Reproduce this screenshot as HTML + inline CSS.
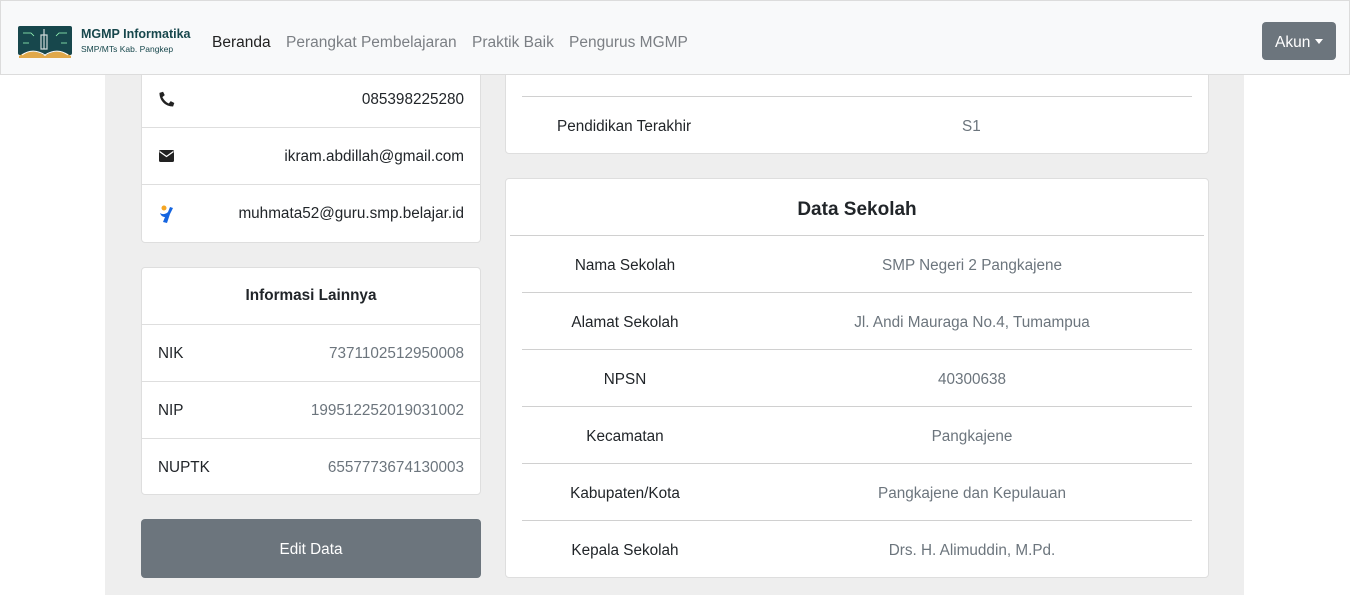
<!DOCTYPE html>
<html><head><meta charset="utf-8"><style>
*{box-sizing:border-box;margin:0;padding:0}
body{width:1350px;height:595px;overflow:hidden;background:#fff;font-family:"Liberation Sans",sans-serif;font-size:15.3px;color:#212529;position:relative}
.wrap{position:absolute;left:105px;top:0;width:1139px;height:595px;background:#eeeeee}
.card{position:absolute;background:#fff;border:1px solid #dedede;border-radius:4px}
.row{position:absolute;left:0;right:0;border-top:1px solid #dedede}
.t{position:absolute;white-space:nowrap}
.gray{color:#6c757d}
nav{position:absolute;left:0;top:0;width:1350px;height:75px;background:#f8f9fa;border:1px solid #dcdcdc}
nav a{position:absolute;top:33px;color:#7b7f84;font-size:15.5px}
.hl{position:absolute;left:16px;right:16px;height:1px;background:#d0d0d0}
</style></head><body>
<div class="wrap"></div>

<div class="card" style="left:141px;top:40px;width:340px;height:203px">
  <div class="row" style="top:86px"></div>
  <div class="row" style="top:143px"></div>
  <svg class="t" style="left:16px;top:49px" width="18" height="18" viewBox="0 0 16 16"><path d="M14.5 11.5l-3.2-1.6-1.7 2.1c-2.6-1.3-4.4-3.1-5.7-5.7l2.1-1.7L4.5 1.5 1.3 2.6C1.3 9.5 6.5 14.7 13.4 14.7z" fill="#222"/></svg>
  <div class="t" style="right:16px;top:50px">085398225280</div>
  <svg class="t" style="left:17px;top:109px" width="15" height="12" viewBox="0 0 15 12"><rect x="0" y="0" width="15" height="12" rx="1.5" fill="#222"/><path d="M0.5 1.5L7.5 6.5 14.5 1.5" stroke="#fff" stroke-width="1.3" fill="none"/></svg>
  <div class="t" style="right:16px;top:107px">ikram.abdillah@gmail.com</div>
  <svg class="t" style="left:17px;top:163px" width="16" height="20" viewBox="0 0 16 20"><circle cx="5" cy="4" r="2.5" fill="#f5a623"/><path d="M1 9c3 2 6 1 8-1l2-5 3 1-3 6-3 9-4-1 2-5C4 13 2 12 1 9z" fill="#1565e0"/></svg>
  <div class="t" style="right:16px;top:164px">muhmata52@guru.smp.belajar.id</div>
</div>

<div class="card" style="left:141px;top:267px;width:340px;height:228px">
  <div class="t" style="left:0;right:0;text-align:center;top:19px;font-weight:bold">Informasi Lainnya</div>
  <div class="row" style="top:56px"></div>
  <div class="row" style="top:113px"></div>
  <div class="row" style="top:170px"></div>
  <div class="t" style="left:16px;top:77px">NIK</div><div class="t gray" style="right:16px;top:77px">7371102512950008</div>
  <div class="t" style="left:16px;top:134px">NIP</div><div class="t gray" style="right:16px;top:134px">199512252019031002</div>
  <div class="t" style="left:16px;top:191px">NUPTK</div><div class="t gray" style="right:16px;top:191px">6557773674130003</div>
</div>

<div style="position:absolute;left:141px;top:519px;width:340px;height:59px;background:#6c757d;border-radius:4px;color:#fff;text-align:center;line-height:61px">Edit Data</div>

<div class="card" style="left:505px;top:20px;width:704px;height:134px">
  <div class="hl" style="top:75px"></div>
  <div class="t" style="left:51px;top:97px">Pendidikan Terakhir</div>
  <div class="t gray" style="left:456px;top:97px">S1</div>
</div>

<div class="card" style="left:505px;top:178px;width:704px;height:400px">
  <div class="t" style="left:0;right:0;text-align:center;top:20px;font-weight:bold;font-size:19px">Data Sekolah</div>
  <div style="position:absolute;left:4px;right:4px;top:56px;height:1px;background:#d0d0d0"></div>
  <div class="hl" style="top:113px"></div>
  <div class="hl" style="top:170px"></div>
  <div class="hl" style="top:227px"></div>
  <div class="hl" style="top:284px"></div>
  <div class="hl" style="top:341px"></div>
</div>
<div style="position:absolute;left:0;top:0">
<div class="t" style="left:522px;width:206px;text-align:center;top:257px">Nama Sekolah</div><div class="t gray" style="left:752px;width:440px;text-align:center;top:257px">SMP Negeri 2 Pangkajene</div>
<div class="t" style="left:522px;width:206px;text-align:center;top:314px">Alamat Sekolah</div><div class="t gray" style="left:752px;width:440px;text-align:center;top:314px">Jl. Andi Mauraga No.4, Tumampua</div>
<div class="t" style="left:522px;width:206px;text-align:center;top:371px">NPSN</div><div class="t gray" style="left:752px;width:440px;text-align:center;top:371px">40300638</div>
<div class="t" style="left:522px;width:206px;text-align:center;top:428px">Kecamatan</div><div class="t gray" style="left:752px;width:440px;text-align:center;top:428px">Pangkajene</div>
<div class="t" style="left:522px;width:206px;text-align:center;top:485px">Kabupaten/Kota</div><div class="t gray" style="left:752px;width:440px;text-align:center;top:485px">Pangkajene dan Kepulauan</div>
<div class="t" style="left:522px;width:206px;text-align:center;top:542px">Kepala Sekolah</div><div class="t gray" style="left:752px;width:440px;text-align:center;top:542px">Drs. H. Alimuddin, M.Pd.</div>
</div>

<nav>
  <svg style="position:absolute;left:16px;top:24px" width="56" height="35" viewBox="0 0 56 35">
    <rect x="1" y="1" width="54" height="29" rx="2" fill="#17474c"/>
    <path d="M27 4v20M24 10h6v14h-6z" stroke="#cfd8d8" stroke-width="1.2" fill="none"/>
    <path d="M6 8h8l3 3M50 8h-8l-3 3M6 18h6M50 18h-6" stroke="#9fb" stroke-width=".8" fill="none"/>
    <path d="M2 31c8-6 18-6 26 0 8-6 18-6 26 0v2H2z" fill="#e0a84a"/>
    <path d="M5 30c7-5 15-5 23 0 8-5 16-5 23 0" stroke="#fff" stroke-width="1" fill="none"/>
  </svg>
  <div style="position:absolute;left:80px;top:26px;font-weight:bold;font-size:12.5px;color:#17474c">MGMP Informatika</div>
  <div style="position:absolute;left:80px;top:43px;font-size:8.5px;color:#17474c">SMP/MTs Kab. Pangkep</div>
  <a style="left:211px;color:#222">Beranda</a>
  <a style="left:285px">Perangkat Pembelajaran</a>
  <a style="left:471px">Praktik Baik</a>
  <a style="left:568px">Pengurus MGMP</a>
  <div style="position:absolute;left:1261px;top:21px;width:74px;height:38px;background:#6c757d;border-radius:4px;color:#fff;font-size:15.5px;line-height:41px;padding-left:13px">Akun <span style="display:inline-block;width:0;height:0;border-left:4px solid transparent;border-right:4px solid transparent;border-top:5px solid #fff;vertical-align:3px"></span></div>
</nav>
</body></html>
